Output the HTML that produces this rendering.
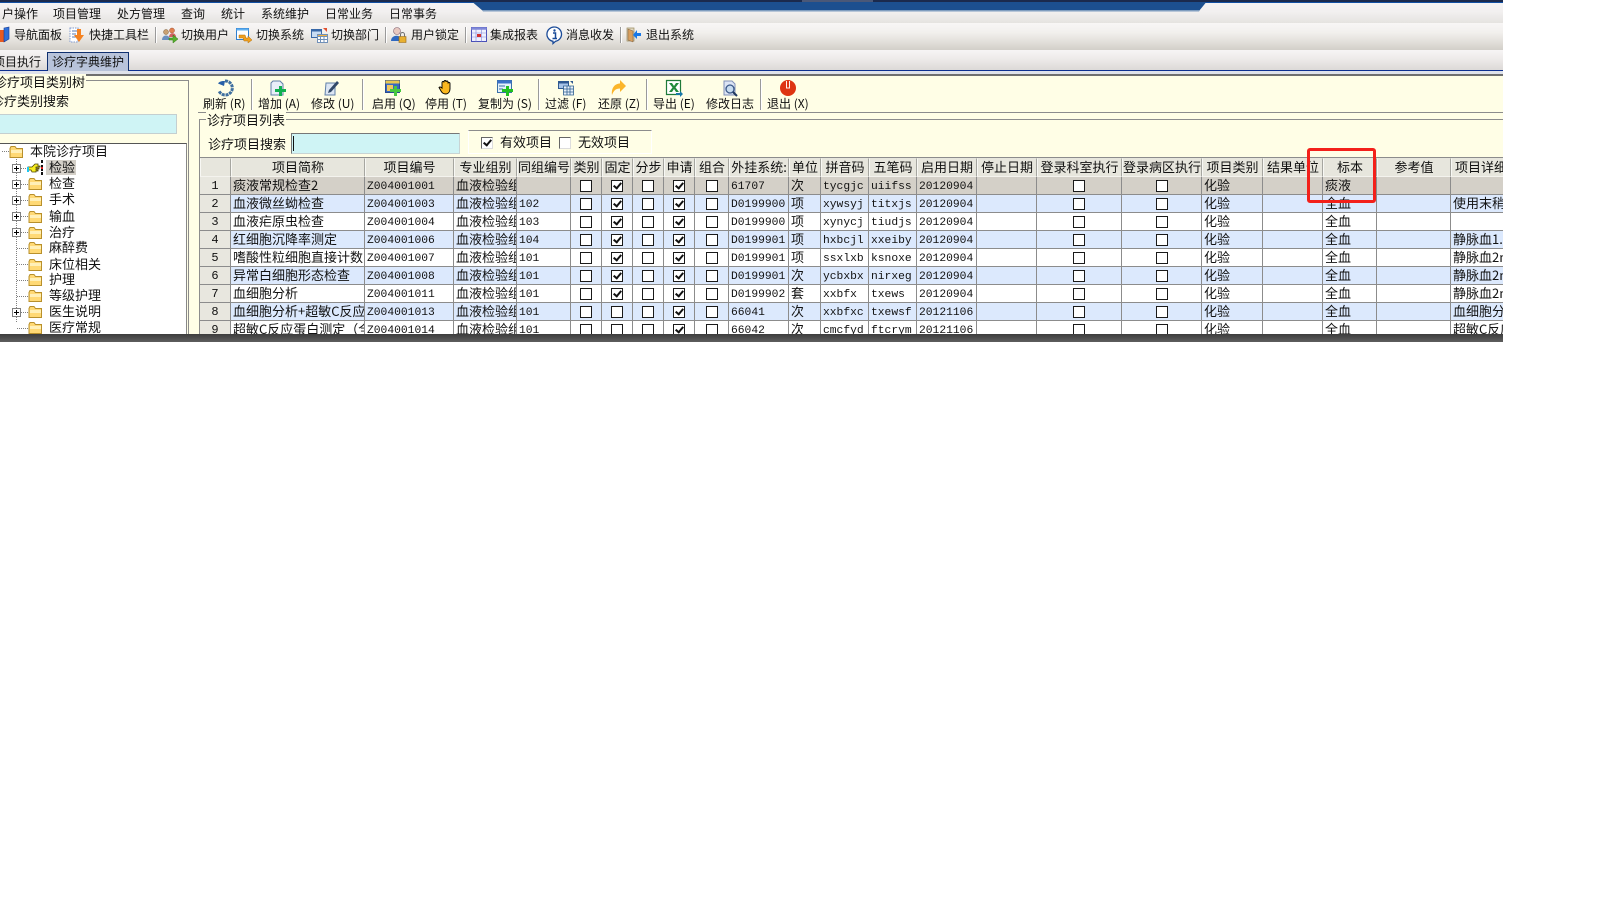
<!DOCTYPE html>
<html lang="zh-CN">
<head>
<meta charset="utf-8">
<title>诊疗字典维护</title>
<style>
html,body{margin:0;padding:0;width:1600px;height:900px;overflow:hidden;background:#fff}
body{font-family:"WenQuanYi Zen Hei","Noto Sans CJK SC",sans-serif;color:#111;font-size:13px}
#app{position:absolute;left:0;top:0;width:1503px;height:342px;overflow:hidden;background:#fffee6}
.a{position:absolute}
.t{position:absolute;white-space:nowrap;line-height:16px;font-size:13px}
.x{font-size:12px}
svg{position:absolute;overflow:visible}
.sep{position:absolute;width:1px;background:#9a9a9a;border-right:1px solid #fff}
.pl{position:absolute;left:12px;width:7px;height:7px;border:1px solid #808080;background:#fff;box-sizing:content-box}
.pl:before{content:"";position:absolute;left:1px;top:3px;width:5px;height:1px;background:#000}
.pl:after{content:"";position:absolute;left:3px;top:1px;width:1px;height:5px;background:#000}
.hd{position:absolute;height:0;border-top:1px dotted #808080}
.vd{position:absolute;width:0;border-left:1px dotted #808080}
#g{position:absolute;left:200px;top:158px;border-collapse:separate;border-spacing:0;table-layout:fixed;width:1311px}
#g th,#g td{padding:0;overflow:hidden;white-space:nowrap;box-sizing:border-box}
#g th{height:19px;background:#e7e6dd;font-weight:normal;font-size:13px;line-height:15px;padding-bottom:2px;text-align:center;border-left:1px solid #f8f8f4;border-right:1px solid #a6a6a0;border-bottom:1px solid #f4f3ee;border-top:1px solid #e7e6dd}
#g td{height:18px;line-height:15px;padding-bottom:2px;font-size:13px;padding-left:2px;border-right:1px solid #8c8c8c;border-bottom:1px solid #8c8c8c;background:#fff}
#g tr.e td{background:#dce9fd}
#g tr.s td{background:#d4d0c8}
#g td.n,#g tr.e td.n,#g tr.s td.n{background:#e8e7df;text-align:center;padding:1px 0 0;line-height:16px;font-family:"Liberation Mono",monospace;font-size:12px}
#g td.m{font-family:"Liberation Mono",monospace;font-size:11.3px;line-height:14px;padding-top:3px;padding-bottom:0}
#g td.k{padding:0}
.c{display:block;position:relative;width:12px;height:12px;border:1px solid #1a1a1a;background:#fff;box-sizing:border-box;margin:1px auto 0}
.c.y:after{content:"";position:absolute;left:3px;top:0;width:3px;height:6px;border-right:2px solid #111;border-bottom:2px solid #111;transform:rotate(40deg)}
.c3{position:absolute;width:12px;height:12px;box-sizing:border-box;background:#fff;border:1px solid;border-color:#666 #ddd #ddd #666}
.c3.y:after{content:"";position:absolute;left:3px;top:0;width:3px;height:6px;border-right:2px solid #111;border-bottom:2px solid #111;transform:rotate(40deg)}
</style>
</head>
<body>
<svg width="0" height="0" style="position:absolute">
<defs>
<symbol id="fd" viewBox="0 0 15 13"><path d="M1 3.500 2 1.500h4l1.500 2h6v9h-12.500z" fill="#ffd975" stroke="#b8902c"/><path d="M2 5h11v3H2z" fill="#fff0b8"/></symbol>
</defs>
</svg>
<div id="app">
<!-- top chrome -->
<div class="a" style="left:0;top:0;width:1503px;height:23px;background:linear-gradient(#f5f3f4,#f2f0f0 50%,#e5e3e0)"></div>
<div class="a" style="left:0;top:0;width:1503px;height:2px;background:#1b2a4d"></div>
<div class="a" style="left:0;top:2px;width:1503px;height:1px;background:#1250a4"></div>
<svg style="left:0;top:0" width="1503" height="12"><path d="M470 0H1208L1199 11H483Z" fill="#1c4f8f"/><path d="M482 10H1200L1199 11.500H483Z" fill="#7f9dbf"/><path d="M470 0H1208V2H470Z" fill="#1b2a4d"/><path d="M802 0H873V2H802Z" fill="#4a5878"/></svg>
<div class="a" style="left:0;top:23px;width:1503px;height:27px;background:linear-gradient(#f8f6f6,#f2f0ed 35%,#e2dfda 70%,#d2cfc9)"></div>
<div class="a" style="left:0;top:50px;width:1503px;height:20px;background:linear-gradient(#f7f5f5,#ece9e8 50%,#dcd9d7)"></div>
<div class="a" style="left:0;top:70px;width:1503px;height:1px;background:#0c2f90"></div>
<div class="a" style="left:0;top:71px;width:1503px;height:3px;background:#dfe2ea"></div>
<div class="a" style="left:0;top:74px;width:1503px;height:2px;background:#6f6f6f"></div>
<!-- menu -->
<span class="t x" style="left:2px;top:6px">户操作</span>
<span class="t x" style="left:53px;top:6px">项目管理</span>
<span class="t x" style="left:117px;top:6px">处方管理</span>
<span class="t x" style="left:181px;top:6px">查询</span>
<span class="t x" style="left:221px;top:6px">统计</span>
<span class="t x" style="left:261px;top:6px">系统维护</span>
<span class="t x" style="left:325px;top:6px">日常业务</span>
<span class="t x" style="left:389px;top:6px">日常事务</span>
<!-- toolbar 1 -->
<svg style="left:0;top:27px" width="12" height="16"><path d="M0 3h5v12H0z" fill="#e85a20"/><path d="M4 1 9 0v12l-5 3z" fill="#2f6fd8" stroke="#1a3a90" stroke-width=".6"/></svg>
<span class="t x" style="left:14px;top:27px">导航面板</span>
<svg style="left:69px;top:27px" width="17" height="16"><path d="M1 1h8v14H1z" fill="#fff" stroke="#7f9ad0" stroke-dasharray="1.500 1"/><path d="M3 4h5M3 7h4M3 10h4" stroke="#5878b0"/><path d="M8 2h4v6h3l-5 7-5-7h3z" fill="#f58220"/></svg>
<span class="t x" style="left:89px;top:27px">快捷工具栏</span>
<div class="sep" style="left:155px;top:27px;height:16px"></div>
<svg style="left:161px;top:27px" width="17" height="16"><circle cx="5" cy="5" r="2.500" fill="#c8a070" stroke="#806040" stroke-width=".5"/><circle cx="11" cy="3.500" r="2.500" fill="#e08050" stroke="#a05030" stroke-width=".5"/><path d="M1 13c0-6 8-6 8 0z" fill="#6a90c0"/><path d="M8 10c0-5 7-5 7 0z" fill="#d06060"/><path d="M8 11h4V8l5 4-5 4v-3H8z" fill="#58b030" stroke="#2f7a10" stroke-width=".5"/></svg>
<span class="t x" style="left:181px;top:27px">切换用户</span>
<svg style="left:236px;top:28px" width="16" height="15"><path d="M.5.500h12v11H.5z" fill="#fff" stroke="#3080d0"/><path d="M.5.500h12v2H.5z" fill="#60b0f0"/><path d="M3 7h6l1 3h2V8l4 4-4 3v-2H8l-1-3H3z" fill="#f0a020" stroke="#b07010" stroke-width=".5"/></svg>
<span class="t x" style="left:256px;top:27px">切换系统</span>
<svg style="left:311px;top:28px" width="17" height="15"><path d="M.5 1.500h10v8H.5z" fill="#c8dcf4" stroke="#3868a8"/><path d="M.5 1.500h10v2H.5z" fill="#3868a8"/><path d="M6.500 6.500h10v8h-10z" fill="#fff" stroke="#7090b8"/><path d="M6.500 6.500h10v2h-10zM9.500 9v5M13 9v5M7 11.500h9" fill="#f0b040" stroke="#7090b8"/><path d="M12 0h4v4z" fill="#e05030"/></svg>
<span class="t x" style="left:331px;top:27px">切换部门</span>
<div class="sep" style="left:385px;top:27px;height:16px"></div>
<svg style="left:391px;top:27px" width="16" height="16"><circle cx="6" cy="4" r="3.500" fill="#e8c8c0" stroke="#806070" stroke-width=".6"/><path d="M0 14c0-7 11-7 11 0z" fill="#2f68c0"/><path d="M8 9.500h7v6H8z" fill="#e8b030" stroke="#906010" stroke-width=".6"/><path d="M9.500 9.500V7.500a2 2 0 0 1 4 0v2" fill="none" stroke="#707070"/></svg>
<span class="t x" style="left:411px;top:27px">用户锁定</span>
<div class="sep" style="left:465px;top:27px;height:16px"></div>
<svg style="left:471px;top:27px" width="17" height="15"><path d="M.5.500h15v14H.5z" fill="#eef0ff" stroke="#4a50b8"/><path d="M.5.500h15v2H.5zM.5 6h15M.5 10h15M5 2.500v12M10.500 2.500v12" fill="#8088d8" stroke="#8088d8" stroke-width=".6"/><path d="M6 7h4v3H6z" fill="#d03030"/></svg>
<span class="t x" style="left:490px;top:27px">集成报表</span>
<svg style="left:546px;top:26px" width="17" height="18"><path d="M8.500 1a7.200 7.200 0 0 1 1 14.300L7 17.500V15.300A7.200 7.200 0 0 1 8.500 1z" fill="#fff" stroke="#1a4a98" stroke-width="1.300"/><circle cx="8.500" cy="4.500" r="1.200" fill="#1a4a98"/><path d="M7 7h2.500v5.500H11M6.500 12.500h3" stroke="#1a4a98" stroke-width="1.500" fill="none"/></svg>
<span class="t x" style="left:566px;top:27px">消息收发</span>
<div class="sep" style="left:620px;top:27px;height:16px"></div>
<svg style="left:626px;top:27px" width="16" height="16"><path d="M1 1h7v13H1z" fill="#e0d8c0" stroke="#9a8a60" stroke-width=".7"/><path d="M2 2l5 2v11l-5-2z" fill="#d8a060" stroke="#806040" stroke-width=".5"/><path d="M15 6h-4V3L7 8l4 4V9h4z" fill="#1878e8"/></svg>
<span class="t x" style="left:646px;top:27px">退出系统</span>
<!-- tabs -->
<span class="t x" style="left:-7px;top:54px">项目执行</span>
<div class="a" style="left:47px;top:52px;width:82px;height:19px;box-sizing:border-box;background:#b8c3da;border:1px solid #10306f;border-bottom:0"></div>
<span class="t x" style="left:52px;top:54px">诊疗字典维护</span>
<!-- left panel -->
<div class="a" style="left:0;top:80px;width:188px;height:1px;background:#8c8c8c"></div>
<div class="a" style="left:188px;top:80px;width:1px;height:254px;background:#8c8c8c"></div>
<span class="t" style="left:-6px;top:74px;background:#fffee6;padding-right:1px">诊疗项目类别树</span>
<span class="t" style="left:-9px;top:93px">诊疗类别搜索</span>
<div class="a" style="left:0;top:114px;width:177px;height:20px;background:#cff4f5;border:1px solid #c4cfd0;box-sizing:border-box;border-left:0"></div>
<div class="a" style="left:0;top:143px;width:187px;height:191px;background:#fff;border-top:1px solid #555;border-right:1px solid #888;box-sizing:border-box"></div>
<!-- tree -->
<div class="hd" style="left:2px;top:151px;width:7px"></div>
<div class="vd" style="left:16px;top:156px;height:166px"></div>
<div class="hd" style="left:21px;top:168px;width:7px"></div>
<div class="hd" style="left:21px;top:184px;width:7px"></div>
<div class="hd" style="left:21px;top:200px;width:7px"></div>
<div class="hd" style="left:21px;top:216px;width:7px"></div>
<div class="hd" style="left:21px;top:232px;width:7px"></div>
<div class="hd" style="left:17px;top:248px;width:11px"></div>
<div class="hd" style="left:17px;top:264px;width:11px"></div>
<div class="hd" style="left:17px;top:280px;width:11px"></div>
<div class="hd" style="left:17px;top:296px;width:11px"></div>
<div class="hd" style="left:21px;top:312px;width:7px"></div>
<div class="hd" style="left:17px;top:328px;width:11px"></div>
<div class="pl" style="top:164px"></div>
<div class="pl" style="top:180px"></div>
<div class="pl" style="top:196px"></div>
<div class="pl" style="top:212px"></div>
<div class="pl" style="top:228px"></div>
<div class="pl" style="top:308px"></div>
<svg style="left:9px;top:145px" width="15" height="13"><use href="#fd"/></svg>
<svg style="left:27px;top:160px" width="16" height="15"><path d="M1 7h4l3-3h3v2h2v1h-4v1h3v1H9v1h2v1H9v1H5l-1-2H1z" fill="#f8ee20" stroke="#4a4000" stroke-width=".8"/><path d="M0 7h2v5H0z" fill="#20c8f0"/><path d="M14 0h2v3h-2zM14 5h2v2h-2zM14 9h2v2h-2zM14 12h2v3h-2z" fill="#111"/><path d="M14 7h2v2h-2z" fill="#e02020"/></svg>
<svg style="left:28px;top:177px" width="15" height="13"><use href="#fd"/></svg>
<svg style="left:28px;top:193px" width="15" height="13"><use href="#fd"/></svg>
<svg style="left:28px;top:210px" width="15" height="13"><use href="#fd"/></svg>
<svg style="left:28px;top:226px" width="15" height="13"><use href="#fd"/></svg>
<svg style="left:28px;top:241px" width="15" height="13"><use href="#fd"/></svg>
<svg style="left:28px;top:258px" width="15" height="13"><use href="#fd"/></svg>
<svg style="left:28px;top:273px" width="15" height="13"><use href="#fd"/></svg>
<svg style="left:28px;top:289px" width="15" height="13"><use href="#fd"/></svg>
<svg style="left:28px;top:305px" width="15" height="13"><use href="#fd"/></svg>
<svg style="left:28px;top:321px" width="15" height="13"><use href="#fd"/></svg>
<div class="a" style="left:46px;top:160px;width:30px;height:15px;background:#d4d0c8"></div>
<span class="t" style="left:30px;top:143px">本院诊疗项目</span>
<span class="t" style="left:49px;top:159px">检验</span>
<span class="t" style="left:49px;top:175px">检查</span>
<span class="t" style="left:49px;top:191px">手术</span>
<span class="t" style="left:49px;top:208px">输血</span>
<span class="t" style="left:49px;top:224px">治疗</span>
<span class="t" style="left:49px;top:239px">麻醉费</span>
<span class="t" style="left:49px;top:256px">床位相关</span>
<span class="t" style="left:49px;top:271px">护理</span>
<span class="t" style="left:49px;top:287px">等级护理</span>
<span class="t" style="left:49px;top:303px">医生说明</span>
<span class="t" style="left:49px;top:319px">医疗常规</span>
<!-- right toolbar -->
<div class="a" style="left:198px;top:76px;width:1305px;height:36px;background:#fffee6"></div>
<div class="a" style="left:198px;top:112px;width:1305px;height:1px;background:#8c8c8c"></div>
<svg style="left:217px;top:80px" width="16" height="16"><path d="M8 1a7 7 0 1 1-6 10" fill="none" stroke="#3f6f9f" stroke-width="3" stroke-dasharray="3 .8"/><path d="M1 3.500C3 1 5 1 8 1l-1 5z" fill="#2860a8"/></svg>
<span class="t x" style="left:203px;top:96px">刷新 (R)</span>
<div class="sep" style="left:251px;top:79px;height:31px"></div>
<svg style="left:270px;top:80px" width="17" height="17"><path d="M3 1h7l3 3v11H1V3z" fill="#e8eef8" stroke="#6080a8"/><path d="M9 6h3v3h4v3h-4v4H9v-4H5V9h4z" fill="#10b050"/></svg>
<span class="t x" style="left:258px;top:96px">增加 (A)</span>
<svg style="left:324px;top:80px" width="16" height="17"><path d="M2 3h9v12H1z" fill="#dce6f4" stroke="#6080a8"/><path d="M5 10 13 1l2 2-8 9-3 1z" fill="#304868"/></svg>
<span class="t x" style="left:311px;top:96px">修改 (U)</span>
<div class="sep" style="left:362px;top:79px;height:31px"></div>
<svg style="left:385px;top:80px" width="16" height="16"><path d="M.5.500h14v12H.5z" fill="#3868c0" stroke="#2a4a90"/><path d="M.5.500h14v3H.5z" fill="#e8c850"/><path d="M2 5h6v6H2z" fill="#f0c860"/><path d="M9 6h3v3h4v3h-4v4H9v-4H5V9h4z" fill="#48c840"/></svg>
<span class="t x" style="left:372px;top:96px">启用 (Q)</span>
<svg style="left:439px;top:80px" width="13" height="15"><path d="M3 6V2.500a1 1 0 0 1 2 0V1.500a1 1 0 0 1 2 0V2a1 1 0 0 1 2 0v1.500a1 1 0 0 1 2 0V9c0 3-2 5-4 5S3 13 2 11L0 7.500c1-1 2-.5 3 .5z" fill="#fbb820" stroke="#000" stroke-width=".9"/></svg>
<span class="t x" style="left:425px;top:96px">停用 (T)</span>
<svg style="left:497px;top:80px" width="17" height="16"><path d="M.5.500h14v12H.5z" fill="#e4f0fa" stroke="#3a70a8"/><path d="M.5.500h14v3H.5z" fill="#3a70c8"/><path d="M2 6h6M2 9h4" stroke="#3a70a8"/><path d="M9 6h3v3h4v3h-4v4H9v-4H5V9h4z" fill="#20c020"/></svg>
<span class="t x" style="left:478px;top:96px">复制为 (S)</span>
<div class="sep" style="left:538px;top:79px;height:31px"></div>
<svg style="left:558px;top:81px" width="16" height="14"><path d="M.5.500h10v7H.5z" fill="#a8c4e8" stroke="#2f5890"/><path d="M.5.500h10v2H.5z" fill="#2f5890"/><path d="M5.500 5h10v9h-10zM9 5v9M12 5v9M5.500 8h10M5.500 11h10" fill="#e8f0fa" stroke="#2f6090" stroke-width=".8"/><path d="M12 0h3v3z" fill="#2f5890"/></svg>
<span class="t x" style="left:545px;top:96px">过滤 (F)</span>
<svg style="left:611px;top:80px" width="15" height="15"><path d="M9 0l6 6-6 6V8.500C5 8.500 3 10 1 15 0 8 4 3.500 9 3.500z" fill="#fbb52a"/></svg>
<span class="t x" style="left:598px;top:96px">还原 (Z)</span>
<div class="sep" style="left:646px;top:79px;height:31px"></div>
<svg style="left:666px;top:80px" width="17" height="17"><path d="M.5.500h14v14H.5z" fill="#fff" stroke="#1f7a3a" stroke-width="1.200"/><path d="M3 3h3l2 3 2-3h3L9.500 7.500 13 12h-3L8 9l-2 3H3l3.500-4.500z" fill="#1f8a3a"/><path d="M10 13h4v-2l3 3-3 3v-2h-4z" fill="#1878a8"/></svg>
<span class="t x" style="left:653px;top:96px">导出 (E)</span>
<svg style="left:722px;top:80px" width="16" height="17"><path d="M2 1h8l3 3v11H2z" fill="#dce4f4" stroke="#8090b8"/><circle cx="8" cy="9" r="4" fill="#c8dcf0" stroke="#3a5888" stroke-width="1.300"/><path d="M11 12l4 4" stroke="#203860" stroke-width="2"/></svg>
<span class="t x" style="left:706px;top:96px">修改日志</span>
<div class="sep" style="left:760px;top:79px;height:31px"></div>
<svg style="left:780px;top:80px" width="16" height="16"><circle cx="8" cy="8" r="8" fill="#de3412"/><path d="M6 1h4v7.500H6z" fill="#fff0e8"/><path d="M7 0h2v7.500H7z" fill="#de3412"/></svg>
<span class="t x" style="left:767px;top:96px">退出 (X)</span>
<!-- list group -->
<div class="a" style="left:199px;top:119px;width:1304px;height:1px;background:#8c8c8c"></div>
<div class="a" style="left:199px;top:119px;width:1px;height:215px;background:#8c8c8c"></div>
<span class="t" style="left:206px;top:112px;background:#fffee6;padding:0 1px">诊疗项目列表</span>
<span class="t" style="left:208px;top:136px">诊疗项目搜索</span>
<div class="a" style="left:291px;top:133px;width:169px;height:21px;background:#cff4f5;box-sizing:border-box;border:1px solid #c8d4d4;border-top-color:#777;border-left-color:#777"></div>
<div class="a" style="left:293px;top:136px;width:1px;height:15px;background:#111"></div>
<div class="a" style="left:468px;top:130px;width:184px;height:24px;box-sizing:border-box;border-top:1px solid #8c8c8c;border-left:1px solid #fff;border-bottom:1px solid #fff;border-right:1px solid #fff"></div>
<i class="c3 y" style="left:481px;top:137px"></i>
<span class="t" style="left:500px;top:134px">有效项目</span>
<i class="c3" style="left:559px;top:137px"></i>
<span class="t" style="left:578px;top:134px">无效项目</span>
<!-- grid -->
<div class="a" style="left:200px;top:157px;width:1303px;height:1px;background:#8c8c8c"></div>
<table id="g">
<colgroup><col style="width:31px"><col style="width:134px"><col style="width:89px"><col style="width:63px"><col style="width:54px"><col style="width:31px"><col style="width:31px"><col style="width:31px"><col style="width:31px"><col style="width:34px"><col style="width:60px"><col style="width:32px"><col style="width:48px"><col style="width:48px"><col style="width:60px"><col style="width:60px"><col style="width:85px"><col style="width:80px"><col style="width:61px"><col style="width:60px"><col style="width:54px"><col style="width:74px"><col style="width:60px"></colgroup>
<thead><tr><th></th><th>项目简称</th><th>项目编号</th><th>专业组别</th><th>同组编号</th><th>类别</th><th>固定</th><th>分步</th><th>申请</th><th>组合</th><th>外挂系统:</th><th>单位</th><th>拼音码</th><th>五笔码</th><th>启用日期</th><th>停止日期</th><th>登录科室执行</th><th>登录病区执行</th><th>项目类别</th><th>结果单位</th><th>标本</th><th>参考值</th><th>项目详细</th></tr></thead>
<tbody>
<tr class="s"><td class="n">1</td><td>痰液常规检查2</td><td class="m">Z004001001</td><td>血液检验组</td><td class="m"></td><td class="k"><i class="c"></i></td><td class="k"><i class="c y"></i></td><td class="k"><i class="c"></i></td><td class="k"><i class="c y"></i></td><td class="k"><i class="c"></i></td><td class="m">61707</td><td>次</td><td class="m">tycgjc</td><td class="m">uiifss</td><td class="m">20120904</td><td></td><td class="k"><i class="c"></i></td><td class="k"><i class="c"></i></td><td>化验</td><td></td><td>痰液</td><td></td><td></td></tr>
<tr class="e"><td class="n">2</td><td>血液微丝蚴检查</td><td class="m">Z004001003</td><td>血液检验组</td><td class="m">102</td><td class="k"><i class="c"></i></td><td class="k"><i class="c y"></i></td><td class="k"><i class="c"></i></td><td class="k"><i class="c y"></i></td><td class="k"><i class="c"></i></td><td class="m">D0199900</td><td>项</td><td class="m">xywsyj</td><td class="m">titxjs</td><td class="m">20120904</td><td></td><td class="k"><i class="c"></i></td><td class="k"><i class="c"></i></td><td>化验</td><td></td><td>全血</td><td></td><td>使用末稍血</td></tr>
<tr><td class="n">3</td><td>血液疟原虫检查</td><td class="m">Z004001004</td><td>血液检验组</td><td class="m">103</td><td class="k"><i class="c"></i></td><td class="k"><i class="c y"></i></td><td class="k"><i class="c"></i></td><td class="k"><i class="c y"></i></td><td class="k"><i class="c"></i></td><td class="m">D0199900</td><td>项</td><td class="m">xynycj</td><td class="m">tiudjs</td><td class="m">20120904</td><td></td><td class="k"><i class="c"></i></td><td class="k"><i class="c"></i></td><td>化验</td><td></td><td>全血</td><td></td><td></td></tr>
<tr class="e"><td class="n">4</td><td>红细胞沉降率测定</td><td class="m">Z004001006</td><td>血液检验组</td><td class="m">104</td><td class="k"><i class="c"></i></td><td class="k"><i class="c y"></i></td><td class="k"><i class="c"></i></td><td class="k"><i class="c y"></i></td><td class="k"><i class="c"></i></td><td class="m">D0199901</td><td>项</td><td class="m">hxbcjl</td><td class="m">xxeiby</td><td class="m">20120904</td><td></td><td class="k"><i class="c"></i></td><td class="k"><i class="c"></i></td><td>化验</td><td></td><td>全血</td><td></td><td>静脉血1.8ml</td></tr>
<tr><td class="n">5</td><td>嗜酸性粒细胞直接计数</td><td class="m">Z004001007</td><td>血液检验组</td><td class="m">101</td><td class="k"><i class="c"></i></td><td class="k"><i class="c y"></i></td><td class="k"><i class="c"></i></td><td class="k"><i class="c y"></i></td><td class="k"><i class="c"></i></td><td class="m">D0199901</td><td>项</td><td class="m">ssxlxb</td><td class="m">ksnoxe</td><td class="m">20120904</td><td></td><td class="k"><i class="c"></i></td><td class="k"><i class="c"></i></td><td>化验</td><td></td><td>全血</td><td></td><td>静脉血2ml</td></tr>
<tr class="e"><td class="n">6</td><td>异常白细胞形态检查</td><td class="m">Z004001008</td><td>血液检验组</td><td class="m">101</td><td class="k"><i class="c"></i></td><td class="k"><i class="c y"></i></td><td class="k"><i class="c"></i></td><td class="k"><i class="c y"></i></td><td class="k"><i class="c"></i></td><td class="m">D0199901</td><td>次</td><td class="m">ycbxbx</td><td class="m">nirxeg</td><td class="m">20120904</td><td></td><td class="k"><i class="c"></i></td><td class="k"><i class="c"></i></td><td>化验</td><td></td><td>全血</td><td></td><td>静脉血2ml</td></tr>
<tr><td class="n">7</td><td>血细胞分析</td><td class="m">Z004001011</td><td>血液检验组</td><td class="m">101</td><td class="k"><i class="c"></i></td><td class="k"><i class="c y"></i></td><td class="k"><i class="c"></i></td><td class="k"><i class="c y"></i></td><td class="k"><i class="c"></i></td><td class="m">D0199902</td><td>套</td><td class="m">xxbfx</td><td class="m">txews</td><td class="m">20120904</td><td></td><td class="k"><i class="c"></i></td><td class="k"><i class="c"></i></td><td>化验</td><td></td><td>全血</td><td></td><td>静脉血2ml</td></tr>
<tr class="e"><td class="n">8</td><td>血细胞分析+超敏C反应</td><td class="m">Z004001013</td><td>血液检验组</td><td class="m">101</td><td class="k"><i class="c"></i></td><td class="k"><i class="c"></i></td><td class="k"><i class="c"></i></td><td class="k"><i class="c y"></i></td><td class="k"><i class="c"></i></td><td class="m">66041</td><td>次</td><td class="m">xxbfxc</td><td class="m">txewsf</td><td class="m">20121106</td><td></td><td class="k"><i class="c"></i></td><td class="k"><i class="c"></i></td><td>化验</td><td></td><td>全血</td><td></td><td>血细胞分析</td></tr>
<tr><td class="n">9</td><td>超敏C反应蛋白测定（全</td><td class="m">Z004001014</td><td>血液检验组</td><td class="m">101</td><td class="k"><i class="c"></i></td><td class="k"><i class="c"></i></td><td class="k"><i class="c"></i></td><td class="k"><i class="c y"></i></td><td class="k"><i class="c"></i></td><td class="m">66042</td><td>次</td><td class="m">cmcfyd</td><td class="m">ftcrym</td><td class="m">20121106</td><td></td><td class="k"><i class="c"></i></td><td class="k"><i class="c"></i></td><td>化验</td><td></td><td>全血</td><td></td><td>超敏C反应</td></tr>
</tbody>
</table>
<!-- red annotation -->
<div class="a" style="left:1307px;top:148px;width:69px;height:55px;box-sizing:border-box;border:3px solid #f3201a;border-radius:3px"></div>
<!-- dark bottom bar -->
<div class="a" style="left:0;top:334px;width:1503px;height:8px;background:linear-gradient(#3d3d3d,#4a4a4a 40%,#5e5e5e)"></div>
</div>
</body>
</html>
